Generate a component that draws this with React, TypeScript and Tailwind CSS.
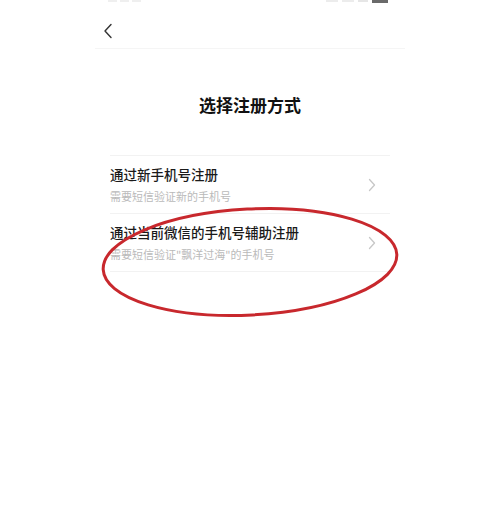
import React from 'react';

const font = '"Noto Sans CJK SC", "Noto Sans", sans-serif';

function Chevron() {
  return (
    <svg width="8" height="14" viewBox="0 0 8 14" fill="none">
      <path d="M1.5 1.5 L6.5 7 L1.5 12.5" stroke="#c7c7c7" strokeWidth="1.3" strokeLinecap="round" strokeLinejoin="round" />
    </svg>
  );
}

interface Option {
  title: string;
  desc: string;
}

const options: Option[] = [
  { title: '通过新手机号注册', desc: '需要短信验证新的手机号' },
  { title: '通过当前微信的手机号辅助注册', desc: '需要短信验证"飘洋过海"的手机号' },
];

export default function App() {
  return (
    <div className="relative w-full h-[522px] bg-white overflow-hidden" style={{ fontFamily: font }}>
      <div className="mx-auto w-[310px]">
        {/* status bar, cut off at the top */}
        <div className="h-[4px] overflow-hidden flex justify-between items-start px-[13px]">
          <div className="flex gap-[3px]">
            <span className="w-[9px] h-[2px] bg-[#efefef]" />
            <span className="w-[9px] h-[2px] bg-[#efefef]" />
            <span className="w-[9px] h-[2px] bg-[#efefef]" />
          </div>
          <div className="flex items-start gap-[4px] pr-[4px]">
            <span className="w-[12px] h-[2px] bg-[#ececec]" />
            <span className="w-[12px] h-[2px] bg-[#ececec]" />
            <span className="w-[10px] h-[2px] bg-[#e6e6e6]" />
            <span className="w-[16px] h-[3px] bg-[#6a6a6a]" />
          </div>
        </div>

        {/* nav */}
        <div className="h-[45px] flex items-start pt-[19px] pl-[8px] border-b border-[#f5f5f5]">
          <svg width="10" height="16" viewBox="0 0 10 16" fill="none">
            <path d="M8 1.5 L2 8 L8 14.5" stroke="#333" strokeWidth="1.4" strokeLinecap="round" strokeLinejoin="round" />
          </svg>
        </div>

        <h1 className="mt-[44px] text-center text-[17px] leading-[24px] font-bold text-[#111]">选择注册方式</h1>

        <div className="mt-[38px] mx-[15px] border-t border-[#f2f2f2]">
          {options.map((o) => (
            <div key={o.title} className="flex items-center justify-between pt-[9px] pb-[9px] pr-[14px] border-b border-[#f2f2f2]">
              <div className="flex flex-col gap-[6px]">
                <span className="text-[13.5px] leading-[18px] font-medium text-[#1a1a1a]">{o.title}</span>
                <span className="text-[11px] leading-[15px] text-[#bababa]">{o.desc}</span>
              </div>
              <Chevron />
            </div>
          ))}
        </div>
      </div>

      {/* red annotation ellipse */}
      <svg className="absolute left-0 top-0 pointer-events-none" width="500" height="522" viewBox="0 0 500 522">
        <ellipse cx="250" cy="262" rx="147" ry="53" fill="none" stroke="#c8282d" strokeWidth="3" transform="rotate(-3 250 262)" />
      </svg>
    </div>
  );
}
